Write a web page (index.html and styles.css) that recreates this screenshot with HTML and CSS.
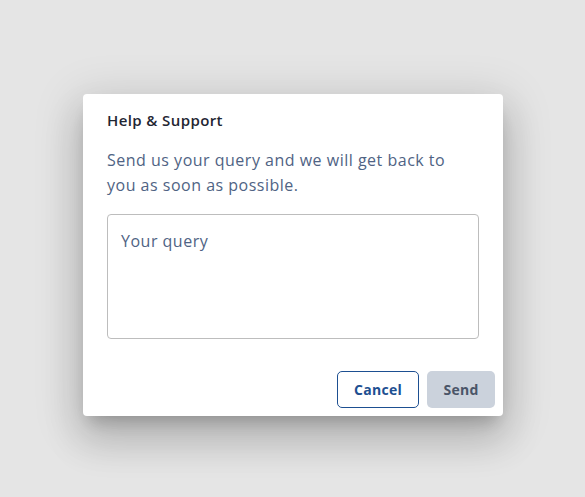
FILE: index.html
```html
<!DOCTYPE html>
<html>
<head>
<meta charset="utf-8">
<link rel="stylesheet" href="styles.css">
</head>
<body>
<div class="overlay">
  <div class="dialog">
    <div class="content">
      <h2 class="title">Help &amp; Support</h2>
      <p class="desc">Send us your query and we will get back to you as soon as possible.</p>
      <textarea class="query" placeholder="Your query"></textarea>
    </div>
    <div class="actions">
      <button class="btn btn-outline">Cancel</button>
      <button class="btn btn-muted">Send</button>
    </div>
  </div>
</div>
</body>
</html>
```
FILE: styles.css
```css
* { box-sizing: border-box; }
html, body { margin: 0; height: 100%; }
body {
  background: #e5e5e5;
  font-family: "Open Sans", "Noto Sans", sans-serif;
}
.overlay {
  height: 497px;
  padding-top: 94px;
  padding-left: 83px;
}
.dialog {
  width: 420px;
  height: 322px;
  background: #fff;
  border-radius: 4px;
  box-shadow: 0 11px 15px -7px rgba(0,0,0,0.2), 0 24px 38px 3px rgba(0,0,0,0.14), 0 9px 46px 8px rgba(0,0,0,0.12);
  display: flex;
  flex-direction: column;
}
.content {
  padding: 14px 24px 0 24px;
  display: flex;
  flex-direction: column;
}
.title {
  margin: 0;
  font-size: 15px;
  font-weight: 600;
  letter-spacing: 0.4px;
  color: #1f2633;
  line-height: 24px;
}
.desc {
  margin: 16px 0 16px 0;
  max-width: 352px;
  font-size: 16px;
  letter-spacing: 0.5px;
  line-height: 25px;
  color: #4f6384;
}
.query {
  width: 372px;
  height: 125px;
  border: 1px solid #bdbdbd;
  border-radius: 4px;
  padding: 15px 13px;
  font-family: inherit;
  font-size: 16px;
  letter-spacing: 0.5px;
  resize: none;
  outline: none;
}
.query::placeholder { color: #4f6384; opacity: 1; }
.actions {
  margin-top: auto;
  padding: 0 8px 8px 0;
  display: flex;
  justify-content: flex-end;
  gap: 8px;
}
.btn {
  height: 37px;
  border-radius: 5px;
  font-family: inherit;
  font-size: 14px;
  font-weight: 700;
  letter-spacing: 0.3px;
  padding: 0;
  cursor: pointer;
}
.btn-outline {
  width: 82px;
  background: #fff;
  border: 1px solid #1d4f91;
  color: #1d4f91;
}
.btn-muted {
  width: 68px;
  background: #cbd2dc;
  border: none;
  color: #4a5568;
}
```
